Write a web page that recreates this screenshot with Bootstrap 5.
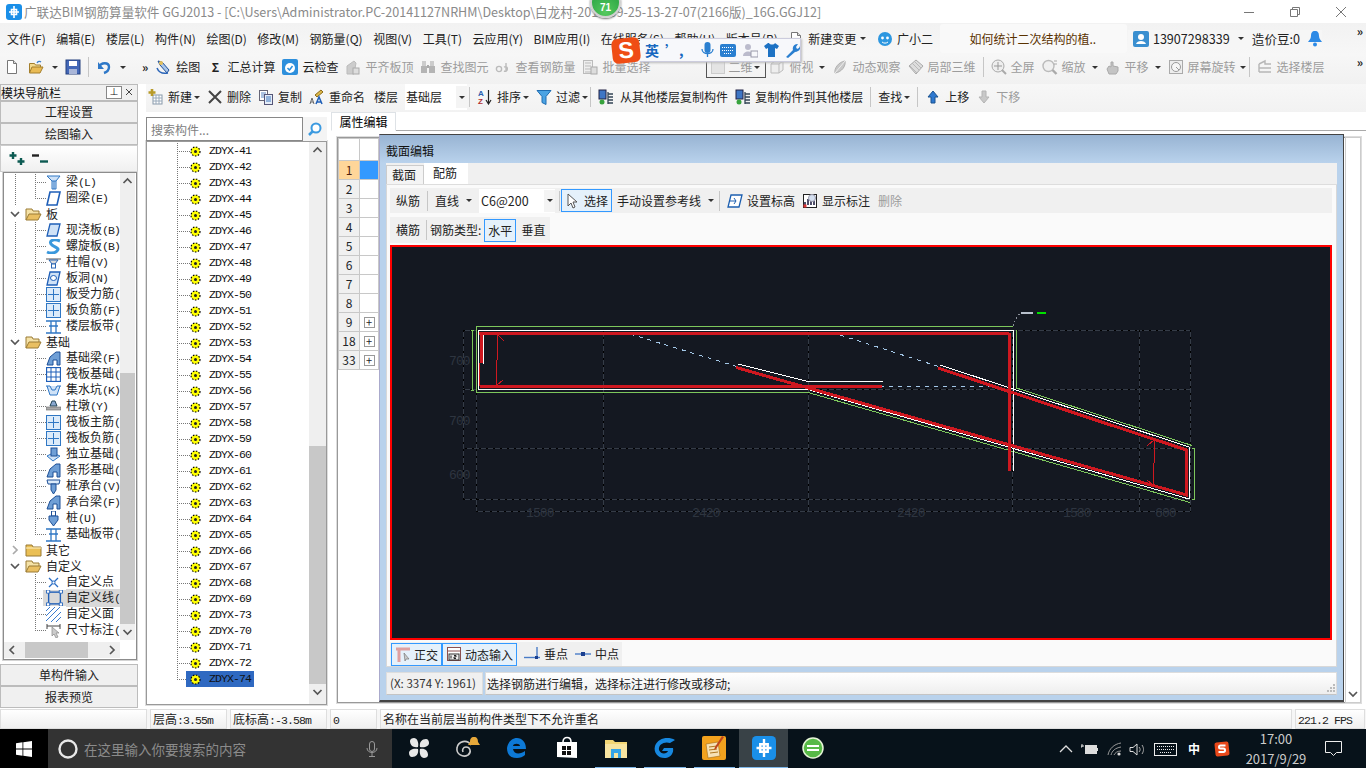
<!DOCTYPE html>
<html lang="zh-CN">
<head>
<meta charset="UTF-8">
<title>广联达BIM钢筋算量软件 GGJ2013</title>
<link href="https://cdn.jsdelivr.net/npm/bootstrap@5.3.0/dist/css/bootstrap.min.css" rel="stylesheet">
<style>
    html, body { width: 1366px; height: 768px; overflow: hidden; }
    body { font: 12px/16px "Noto Sans CJK SC", "Liberation Sans", sans-serif; color: #222; background: #fff; }
    svg { flex: none; display: block; }
    .ic { width: 16px; height: 16px; }
    .ascii { font: 11.5px/16px "Liberation Mono", monospace; letter-spacing: -.9px; }
    .caret-dn { width: 0; height: 0; border: 3px solid transparent; border-top: 3px solid #333; border-bottom: 0; flex: none; }

    /* title + menu */
    .title-bar { height: 23px; color: #8a8a8a; font-size: 12.58px; padding-left: 6px; gap: 2px; }
    .win-ctl { margin-left: auto; gap: 34px; padding-right: 19px; }
    .menu-bar { height: 31px; background: linear-gradient(#f2f2f2, #f7f7f7); padding-left: 7px; gap: 10.5px; }
    .menu-bar .ask { width: 187px; height: 29px; background: #f9f9f9; border-radius: 3px; color: #5a3200; padding-left: 29px; margin-left: -3px; }
    .user-box { gap: 4px; margin-left: -10px; padding-left: 5px; background: #f6f6f6; font-size: 12.6px; }
    .more { position: absolute; right: 3px; top: 2px; font-size: 12px; line-height: 12px; font-weight: 700; color: #222; }

    /* toolbars */
    .tool-1 { height: 30px; background: linear-gradient(#f7f7f7, #f1f1f1); position: relative; padding: 0 0 4px 4px; }
    .tool-2 { height: 28px; background: linear-gradient(#f7f7f7, #f2f2f2); padding: 0 0 2px 2px; gap: 7px; }
    .tb-item { gap: 4px; white-space: nowrap; }
    .tool-1-items { gap: 7px; }
    .off { color: #9c9c9c; }
    .sep { width: 1px; height: 20px; background: #c6c6c6; flex: none; }
    .sep-bar { margin: 0 7px; }
    .save-gap { margin-left: -1px; }
    .cr-2 { margin-left: 2px; }
    .sep.pull { margin-left: -4px; }
    .tool-2 .sep.hug { margin-left: -5px; }
    .tool-2 .caret-dn { margin-left: -2px; }
    .tool-2 .wide-ic { gap: 6px; }
    .tool-2 .sort-ic { gap: 4px; }
    .push-2 { margin-right: 2px; }
    .dim-combo { width: 60px; height: 22px; border: 1px solid #555; margin: 0 -4px 0 49px; padding: 0 5px 0 4px; color: #999; }
    .dim-combo i:first-child { width: 14px; height: 14px; background: #e4e4e4; border: 1px solid #ccc; margin-right: 3px; }

    /* left nav */
    .nav-col { width: 138px; flex: none; }
    .nav-head { height: 17px; background: #f0f0f0; border: 1px solid #bbb; color: #111; line-height: 14px; white-space: nowrap; }
    .pin { width: 16px; height: 13px; background: #fff; border: 1px solid #888; font-size: 9px; line-height: 10px; text-align: center; }
    .btn.nav-btn { height: 22px; padding: 0; font-size: 12px; line-height: 20px; color: #222; background: #f0f0f0; border: 1px solid #bcbcbc; border-radius: 0; width: 138px; flex: none; }
    .plus-row { height: 27px; padding-left: 7px; gap: 5px; background: linear-gradient(#fff, #f0f0f0); border: 1px solid #ccc; width: 138px; }
    .tree-box { margin: 0 1px 0 3px; height: 488px; border: 1px solid #8c8c8c; outline: 1px solid #d4d4d4; background: #fff; }
    .tree-rows { width: 116px; height: 467px; padding-top: 1px; overflow: hidden; }
    .t-row { height: 16px; white-space: nowrap; line-height: 16px; }
    .t-leaf { padding-left: 42px; gap: 5px;
        background:
            repeating-linear-gradient(to bottom, #777 0 1px, transparent 1px 2px) 11px 0 / 1px 100% no-repeat,
            repeating-linear-gradient(to bottom, #777 0 1px, transparent 1px 2px) 31px 0 / 1px 100% no-repeat,
            repeating-linear-gradient(to right, #777 0 1px, transparent 1px 2px) 31px 8px / 11px 1px no-repeat; }
    .t-leaf.t-end { background:
            repeating-linear-gradient(to bottom, #777 0 1px, transparent 1px 2px) 11px 0 / 1px 100% no-repeat,
            repeating-linear-gradient(to bottom, #777 0 1px, transparent 1px 2px) 31px 0 / 1px 50% no-repeat,
            repeating-linear-gradient(to right, #777 0 1px, transparent 1px 2px) 31px 8px / 11px 1px no-repeat; }
    .t-leaf.t-last { background:
            repeating-linear-gradient(to bottom, #777 0 1px, transparent 1px 2px) 31px 0 / 1px 50% no-repeat,
            repeating-linear-gradient(to right, #777 0 1px, transparent 1px 2px) 31px 8px / 11px 1px no-repeat; }
    .t-leaf.t-last2 { background:
            repeating-linear-gradient(to bottom, #777 0 1px, transparent 1px 2px) 31px 0 / 1px 100% no-repeat,
            repeating-linear-gradient(to right, #777 0 1px, transparent 1px 2px) 31px 8px / 11px 1px no-repeat; }
    .t-leaf b { font-weight: 400; }
    .t-leaf.t-sel b { background: #d9d9d9; flex: 1; }
    .t-leaf.t-sel { padding-left: 39px; gap: 0; }
    .t-leaf.t-sel svg { background: #d9d9d9; padding: 0 3px; width: 23px; height: 16px; }
    .t-fold { padding-left: 5px; gap: 4px; }
    .fold-chev { width: 12px; height: 12px; }
    .fold-ic { width: 17px; height: 15px; }
    .vbar { width: 15px; background: #efefef; }
    .vbar .arr { height: 16px; }
    .vbar .thumb { background: #c8c8c8; }
    .th-tree { margin-top: 184px; height: 251px; }
    .th-list { margin-top: 288px; height: 238px; }
    .hbar { height: 16px; width: 116px; margin: 2px 0 1px; background: #efefef; }
    .hbar i { display: block; width: 63px; height: 100%; background: #c8c8c8; margin: 0 auto 0 5px; }
    .hbar svg { margin: 2px 2px 0; }

    /* component list */
    .list-col { width: 181px; flex: none; padding-top: 5px; }
    .search-in.form-control { width: 156px; height: 24px; padding: 0 2px 0 4px; font-size: 12px; border: 1px solid #888; border-radius: 0; background: #fff; }
    .search-in::placeholder { color: #808080; }
    .search-btn { width: 25px; height: 24px; background: #f4f4f4; }
    .comp-box { height: 564px; border: 1px solid #999; outline: 1px solid #ddd; background: #fff; }
    .comp-rows { flex: 1; padding-top: 1px; overflow: hidden; }
    .c-row { height: 16px; padding-left: 43px; gap: 8px;
        background:
            repeating-linear-gradient(to bottom, #777 0 1px, transparent 1px 2px) 30px 0 / 1px 100% no-repeat,
            repeating-linear-gradient(to right, #777 0 1px, transparent 1px 2px) 30px 8px / 13px 1px no-repeat; }
    .c-row.c-last { background:
            repeating-linear-gradient(to bottom, #777 0 1px, transparent 1px 2px) 30px 0 / 1px 50% no-repeat,
            repeating-linear-gradient(to right, #777 0 1px, transparent 1px 2px) 30px 8px / 9px 1px no-repeat; }
    .c-row span { color: #111; }
    .c-pill { padding: 0 3px 0 4px; height: 16px; gap: 8px; background: #2f69c1; margin-left: -4px; }
    .list-vbar { width: 17px; }

    /* property panel + grid */
    .prop-col { margin-left: 4px; flex: 1; position: relative; }
    .nav-tabs.prop-tabs { height: 19px; border-bottom: 1px solid #aaa; }
    .prop-tabs .nav-link { height: 19px; width: 65px; padding: 0; text-align: center; font-size: 12px; line-height: 17px; color: #222; background: #fff; border: 1px solid #bbb; border-bottom-color: #fff; border-radius: 0; }
    .grid-wrap { margin: 6px 5px 6px 6px; height: 566px; border: 1px solid #999; outline: 1px solid #ddd; }
    table.prop-grid { width: 41px; margin: 0; table-layout: fixed; --bs-table-border-color: #c8c8c8; }
    .prop-grid td { padding: 0; height: 19px; text-align: center; line-height: 17px; font-size: 12px; }
    .prop-grid td:first-child { width: 21px; background: #f0f0f0; }
    .prop-grid tr.head td { height: 22px; background: #fff; }
    .prop-grid tr.now td:first-child { background: #ffd699; color: #502010; }
    .prop-grid tr.now td:last-child { background: #3399ff; }
    .expand { display: inline-block; width: 11px; height: 11px; border: 1px solid #999; line-height: 8px; font-size: 11px; background: #fff; }
    .side-scroll { position: absolute; right: 5px; top: 25px; width: 16px; height: 566px; border: 1px solid #ccc; }

    /* section dialog */
    .sec-dlg { position: absolute; left: 48px; top: 22px; width: 965px; height: 568px; background: #b9d2ec; border: 1px solid #444; border-bottom-width: 2px; border-left-color: #aac; padding: 0 6px; }
    .dlg-title { height: 28px; margin: 0 -6px; padding: 7px 0 0 6px; color: #111; background: linear-gradient(#98b4d3, #b9d2ec); line-height: 18px; flex: none; }
    .nav-tabs.dlg-tabs { height: 22px; background: #f0f0f0; border-bottom: 1px solid #ddd; flex: none; }
    .dlg-tabs .nav-link { padding: 0 2px 0 0; width: 38px; height: 19px; margin-top: 2px; font-size: 12px; line-height: 18px; text-align: center; color: #222; border: 1px solid #ccc; border-bottom: 0; border-radius: 0; background: #f4f4f4; }
    .dlg-tabs .nav-link.active { width: 44px; height: 21px; margin-top: 0; background: #fff; border-color: #fff; color: #222; }
    .dlg-panel { background: #fafafa; border: 1px solid #d8d8d8; border-top: 0; padding: 3px 4px 0 3px; height: 482px; flex: none; }
    .rb-row { background: #f0f0f0; padding-left: 6px; gap: 7px; }
    .rb-row.wide { height: 25px; width: 100%; margin-bottom: 4px; }
    .rb-row.narrow { height: 26px; width: 160px; gap: 3px; margin-bottom: 2px; }
    .rb-row .sep.hug { margin: 0 -6px 0 -3px; }
    .rb-row .pull-ref { margin-left: -2px; }
    .rb-row .sep.pull-sep { margin-left: -2px; }
    .rb-row .push-del { margin-left: 1px; }
    .rb-row.narrow .me-tight { margin-right: 3px; }
    .rb-row.narrow .after-btn { margin-left: 2px; }
    .btn.rb-on { height: 23px; padding: 0 3px; font-size: 12px; line-height: 19px; color: #222; background: #e5f1fb; border: 1px solid #3399ff; border-radius: 0; gap: 3px; }
    .rb-combo { width: 76px; height: 24px; background: #fff; padding: 0 0 0 2px; font-size: 12.5px; }
    .rb-combo u, .fl-combo u { width: 11px; height: 22px; background: #f4f4f4; text-decoration: none; margin-left: auto; }
    .rebar-canvas { height: 395px; border: 2px solid #f00; background: #141821; flex: none; }
    .snap-row { height: 24px; width: 232px; background: #f0f0f0; padding: 0 0 0 1px; gap: 7px; margin-top: 2px; }
    .fl-combo { width: 62px; height: 26px; background: #fff; padding: 0 0 0 1px; }
    .dlg-foot { height: 23px; margin-top: 5px; gap: 2px; flex: none; }
    .dlg-foot div { background: linear-gradient(#fff, #eee); border: 1px solid #ddd; border-bottom-color: #c4c4c4; padding-left: 1px; line-height: 21px; }
    .dlg-foot .xy { width: 97px; color: #333; background: #f0f0f0; font-size: 11.6px; padding-left: 3px; }
    .grip { margin: 10px 1px 0 auto; }

    /* status + taskbar */
    .status-bar { height: 20px; gap: 3px; background: #f6f6f6; padding-right: 1px; }
    .status-bar div { border: 1px solid #dedede; background: linear-gradient(#fff, #efefef); padding-left: 2px; height: 20px; line-height: 18px; white-space: nowrap; }
    .st-blank { width: 147px; } .st-h { width: 77px; } .st-b { width: 97px; } .st-n { width: 47px; } .st-fps { width: 70px; }
    .task-bar { height: 40px; background: #07121a; color: #fff; }
    .start { width: 48px; background: #000; }
    .search-bar { width: 344px; background: #333; color: #8b8b8b; font-size: 13.5px; padding-left: 10px; gap: 6px; }
    .search-bar svg:last-child { margin-left: auto; margin-right: 14px; }
    .task-row { margin-left: 2px; }
    .task-ic { width: 49.3px; height: 40px; border-bottom: 2px solid transparent; }
    .task-ic.open { position: relative; }
    .task-ic.open::after { content: ""; position: absolute; left: 4px; right: 4px; bottom: -2px; height: 2px; background: #7fb8ea; }
    .task-ic.act { background: #394247; border-bottom-color: #7fb8ea; }
    .tray { margin-left: auto; }
    .clock { width: 74px; text-align: center; line-height: 20px; color: #ccc; font-size: 13px; margin-left: 9px; }
    .note-ic { margin: 0 24px 0 12px; }
    .tr-up { margin-right: 8px; } .tr-bat { margin-right: 9px; } .tr-wifi { margin-right: 6px; } .tr-vol { margin-right: 9px; } .tr-kb { margin-right: 11px; } .tr-zh { margin-right: 14px; }

    /* floating bits on top of the screenshot */
    .ball { position: absolute; left: 590px; top: -13px; width: 31px; height: 31px; border-radius: 50%; background: radial-gradient(circle at 50% 85%, #55c95e, #1f9a3c); border: 2px solid #d0d0d0; box-shadow: 0 1px 2px #777; color: #fff; font: 700 10px/38px "Liberation Sans", sans-serif; text-align: center; }
    .ime { position: absolute; left: 612px; top: 38px; height: 25px; width: 184px; }
    .ime-s { width: 28px; height: 25px; background: #ef4d15; border-radius: 6px; transform: rotate(-6deg); color: #fff; font: 700 23px/25px "Liberation Sans", sans-serif; text-align: center; flex: none; }
    .ime-bar { flex: 1; height: 24px; background: #f7f8fb; border: 1px solid #ccd; border-left: 0; padding-left: 5px; gap: 6px; color: #1768c0; font-weight: 700; font-size: 14px; box-shadow: 1px 1px 2px #bbb; }
    .ime-mic { margin-left: 11px; }
</style>
</head>
<body>

<svg width="0" height="0" class="position-absolute">
    <defs>
        <symbol id="i-app" viewBox="0 0 16 16"><rect width="16" height="16" rx="3" fill="#1a8fe8"/><path d="M8 2v12M3 8h10M5.500 5.500h5v5h-5z" fill="none" stroke="#fff" stroke-width="1.600"/></symbol>
        <symbol id="i-page" viewBox="0 0 16 16"><path d="M3.500 1.500h6l3 3v10h-9z" fill="#fff" stroke="#777"/><path d="M9.500 1.500v3h3" fill="#ddd" stroke="#777"/></symbol>
        <symbol id="i-open" viewBox="0 0 16 16"><path d="M1.500 14V4.500h5l1 1.500h5v2" fill="#f3d98e" stroke="#a47f2d"/><path d="M1.500 14l2.500-6h11l-3 6z" fill="#e9bb55" stroke="#a47f2d"/><path d="M9 4c1-2 3-2 4-1" fill="none" stroke="#3b7fc9" stroke-width="1.200"/></symbol>
        <symbol id="i-save" viewBox="0 0 16 16"><rect x="1" y="1" width="14" height="14" fill="#4468b8" stroke="#24407f"/><rect x="4" y="2" width="8" height="5" fill="#fff"/><rect x="4" y="10" width="8" height="5" fill="#a9b6d8"/></symbol>
        <symbol id="i-undo" viewBox="0 0 16 16"><path d="M3 8c2-5 10-5 10 0 0 3-2 5-5 6" fill="none" stroke="#2e78c8" stroke-width="2.400"/><path d="M2 3v7h6z" fill="#2e78c8"/></symbol>
        <symbol id="i-draw" viewBox="0 0 16 16"><path d="M2 2l4 1 7 8-2 3-7-8z" fill="#a9c6ea" stroke="#1f4f98"/><path d="M1 9c2 5 6 6 11 5" fill="none" stroke="#2b65b8" stroke-width="1.500"/><circle cx="5" cy="4" r="2" fill="#e5c05a"/></symbol>
        <symbol id="i-cloud" viewBox="0 0 16 16"><rect width="16" height="16" rx="2" fill="#2d8fdc"/><circle cx="8" cy="9" r="5" fill="#fff"/><path d="M5.500 9l2 2 3-4" fill="none" stroke="#2d8fdc" stroke-width="1.500"/></symbol>
        <symbol id="i-g-flat" viewBox="0 0 16 16"><path d="M2 15V7l7-5 2 2-2 11z" fill="#ccc" stroke="#bbb"/><rect x="8" y="9" width="6" height="6" fill="#ddd" stroke="#aaa"/></symbol>
        <symbol id="i-g-bin" viewBox="0 0 16 16"><rect x="2" y="2" width="4" height="5" fill="#ccc"/><rect x="10" y="2" width="4" height="5" fill="#ccc"/><rect x="1" y="7" width="6" height="7" fill="#b4b4b4"/><rect x="9" y="7" width="6" height="7" fill="#b4b4b4"/><rect x="7" y="6" width="2" height="3" fill="#aaa"/></symbol>
        <symbol id="i-g-rebar" viewBox="0 0 16 16"><circle cx="4" cy="10" r="2.600" fill="none" stroke="#bbb" stroke-width="1.400"/><path d="M9 8c5-2 4 6 0 4M11 4v8" fill="none" stroke="#bbb" stroke-width="1.400"/></symbol>
        <symbol id="i-g-batch" viewBox="0 0 16 16"><rect x="1.500" y="1.500" width="9" height="13" fill="#eee" stroke="#bbb"/><path d="M3 4h6M3 7h6M3 10h6M3 13h6" stroke="#bbb"/><rect x="9" y="8" width="6" height="7" fill="#ddd" stroke="#aaa"/></symbol>
        <symbol id="i-g-box" viewBox="0 0 16 16"><path d="M2 5l4-3h8v9l-4 3H2z" fill="#eee" stroke="#bbb"/><path d="M2 5h8v9M10 5l4-3" fill="none" stroke="#bbb"/></symbol>
        <symbol id="i-g-orbit" viewBox="0 0 16 16"><path d="M3 14c-1-4 3-11 10-12 1 5-3 11-10 12z" fill="#c8c8c8" stroke="#b0b0b0"/><path d="M3 14L13 2" stroke="#eee"/></symbol>
        <symbol id="i-g-cube" viewBox="0 0 16 16"><path d="M8 1l7 6-7 8-7-8z" fill="#ddd" stroke="#aaa"/><path d="M4 4l7 7M6 2l7 7M2 7l7 7" stroke="#b8b8b8"/></symbol>
        <symbol id="i-g-full" viewBox="0 0 16 16"><circle cx="7" cy="7" r="6" fill="#eee" stroke="#aaa"/><path d="M7 3v8M3 7h8" stroke="#999"/><path d="M11 11l4 4" stroke="#aaa" stroke-width="2"/></symbol>
        <symbol id="i-g-zoom" viewBox="0 0 16 16"><circle cx="6.500" cy="7" r="5.500" fill="#f0f0f0" stroke="#bbb" stroke-width="1.400"/><path d="M10.500 11l4 4" stroke="#aaa" stroke-width="2.400"/><path d="M12 2h3M12 5h3" stroke="#aaa"/></symbol>
        <symbol id="i-g-hand" viewBox="0 0 16 16"><path d="M4 15l-2-5 2-3 2 1V3h2v4l5 1v4l-2 3z" fill="#c4c4c4" stroke="#aaa"/></symbol>
        <symbol id="i-g-rot" viewBox="0 0 16 16"><rect x="1.500" y="1.500" width="13" height="13" fill="#eee" stroke="#aaa"/><circle cx="8" cy="8" r="4.500" fill="#f7f7f7" stroke="#9a9a9a"/><path d="M8 8l3 3" stroke="#999"/></symbol>
        <symbol id="i-g-floor" viewBox="0 0 16 16"><path d="M2 5l6-3v3l6 0M2 9h12M2 13h12M2 5v8" fill="none" stroke="#b6b6b6" stroke-width="1.400"/></symbol>
        <symbol id="i-plus" viewBox="0 0 16 16"><rect x="5" y="6" width="9" height="9" fill="#fff" stroke="#89a"/><path d="M5 9h9M5 12h9M8 6v9M11 6v9" stroke="#9ab"/><path d="M4 0v7M0.500 3.500h7" stroke="#b89b2a" stroke-width="2.600"/></symbol>
        <symbol id="i-x" viewBox="0 0 16 16"><path d="M2 2l12 12M14 2L2 14" stroke="#444" stroke-width="2"/></symbol>
        <symbol id="i-copy" viewBox="0 0 16 16"><rect x="1.500" y="1.500" width="8" height="10" fill="#fff" stroke="#667"/><path d="M3 4h5M3 6h5M3 8h5" stroke="#5b87c3"/><rect x="6.500" y="5.500" width="8" height="10" fill="#e5edf8" stroke="#557"/><path d="M8 8h5M8 10h5M8 12h5" stroke="#3f78c0"/></symbol>
        <symbol id="i-rename" viewBox="0 0 16 16"><path d="M6 6l6-5 2 2-6 5z" fill="#dcb84a" stroke="#8c6a18"/><path d="M1 15l2-6 2 6M2 13h2" fill="none" stroke="#666"/><path d="M7 15l3-7 3 7M8.200 13h3.600" fill="none" stroke="#2060b8" stroke-width="1.500"/></symbol>
        <symbol id="i-sort" viewBox="0 0 16 16"><text x="1" y="7" font-size="8" font-weight="700" fill="#2860b0" font-family="Liberation Sans">A</text><text x="1" y="15" font-size="8" font-weight="700" fill="#b03030" font-family="Liberation Sans">Z</text><path d="M11.500 1v13M9 11l2.500 4 2.500-4" fill="none" stroke="#222" stroke-width="1.200"/></symbol>
        <symbol id="i-filter" viewBox="0 0 16 16"><path d="M1 1.500h14l-5 6v8l-4-2v-6z" fill="#4ba3e3" stroke="#1f6db2"/></symbol>
        <symbol id="i-fromf" viewBox="0 0 16 16"><rect x="1" y="1" width="7" height="9" fill="#3e76c5" stroke="#224"/><circle cx="4" cy="13" r="2.500" fill="#37a33d"/><path d="M10 5h5M10 8h5M10 11h5M10 14h5M10 3v12" stroke="#345" stroke-width="1.300"/></symbol>
        <symbol id="i-up" viewBox="0 0 16 16"><path d="M8 2l5 6h-3v6H6V8H3z" fill="#2e78cf" stroke="#1a528f"/></symbol>
        <symbol id="i-dn" viewBox="0 0 16 16"><path d="M8 14l5-6h-3V2H6v6H3z" fill="#c8c8c8" stroke="#b4b4b4"/></symbol>
        <symbol id="i-cursor" viewBox="0 0 16 16"><path d="M3 1l0 12 3-3 2 5 2-1-2-5h4z" fill="#fff" stroke="#555"/></symbol>
        <symbol id="i-level" viewBox="0 0 16 16"><path d="M4 2h11l-3 12H1z" fill="#fff" stroke="#1c5fb0" stroke-width="1.300"/><path d="M2 8h7l-2 3M9 8L7 5" fill="none" stroke="#1c5fb0"/></symbol>
        <symbol id="i-mark" viewBox="0 0 16 16"><rect x="1.500" y="1.500" width="13" height="13" fill="#fff" stroke="#222"/><path d="M3 12V9M6 12V6M9 12V4M12 12V8" stroke="#224" stroke-width="1.600"/><circle cx="10" cy="5" r="3.500" fill="#d4dff0" stroke="#99a"/><rect x="1.500" y="11.500" width="3" height="3" fill="#d33"/></symbol>
        <symbol id="i-ortho" viewBox="0 0 16 16"><path d="M1 3h14M4 3v13" stroke="#dfa0a0" stroke-width="3"/><path d="M9 7l5 6-3 0-1 2z" fill="#ccc" stroke="#777" stroke-width=".7"/></symbol>
        <symbol id="i-dyn" viewBox="0 0 16 16"><rect x="1.500" y="1.500" width="13" height="13" fill="#fff" stroke="#8b5050"/><path d="M1 5h14" stroke="#8b5050"/><rect x="3" y="8" width="10" height="6" fill="#eee" stroke="#333"/><path d="M5 9.500v3M8 9.500h2v1.500H8v1.500h2" stroke="#222" fill="none"/></symbol>
        <symbol id="i-perp" viewBox="0 0 16 16"><path d="M0 11.500h16" stroke="#4a7cc7" stroke-width="1.400"/><path d="M13 1v11" stroke="#4a7cc7" stroke-width="1.400"/><rect x="11" y="10" width="3" height="3" fill="#1b3f90"/></symbol>
        <symbol id="i-mid" viewBox="0 0 16 16"><path d="M0 8h16" stroke="#4a7cc7" stroke-width="1.400"/><rect x="6" y="6" width="4" height="4" fill="#1b3f90"/></symbol>
        <symbol id="fold-open" viewBox="0 0 17 15"><path d="M1 13V2h6l1 2h6v3" fill="#f5e2a7" stroke="#9a7b34"/><path d="M1 13l3-6h12l-3 6z" fill="#e9bf62" stroke="#9a7b34"/></symbol>
        <symbol id="fold-shut" viewBox="0 0 17 15"><path d="M1 13V2h6l1 2h8v9z" fill="#eabf55" stroke="#9a7b34"/><path d="M1 5h15" stroke="#fff2c6"/></symbol>
        <symbol id="chev-d" viewBox="0 0 12 12"><path d="M2 4l4 4 4-4" fill="none" stroke="#555" stroke-width="1.700"/></symbol>
        <symbol id="chev-r" viewBox="0 0 12 12"><path d="M4 2l4 4-4 4" fill="none" stroke="#aaa" stroke-width="1.700"/></symbol>
        <symbol id="chev-u" viewBox="0 0 12 12"><path d="M2 8l4-4 4 4" fill="none" stroke="#555" stroke-width="1.700"/></symbol>
        <symbol id="chev-l" viewBox="0 0 12 12"><path d="M8 2L4 6l4 4" fill="none" stroke="#555" stroke-width="1.700"/></symbol>
        <symbol id="chev-rd" viewBox="0 0 12 12"><path d="M4 2l4 4-4 4" fill="none" stroke="#555" stroke-width="1.700"/></symbol>
        <symbol id="t-beam" viewBox="0 0 15 15"><path d="M1 1h13l-4 5v8H6V6z" fill="#cfe2f7" stroke="#2f77c4"/><path d="M6 6h4M8 6v8" stroke="#2f77c4"/></symbol>
        <symbol id="t-ring" viewBox="0 0 15 15"><path d="M4 1h10l-3 13H1z" fill="#fff" stroke="#1f5fb8" stroke-width="1.600"/></symbol>
        <symbol id="t-plate" viewBox="0 0 15 15"><path d="M4 1h10l-3 12H1z" fill="#cfe2f7" stroke="#1f5fb8" stroke-width="1.300"/></symbol>
        <symbol id="t-spiral" viewBox="0 0 15 15"><path d="M14 2C6-1 2 3 6 6s8 3 5 6-8 2-10 1" fill="none" stroke="#3a98dc" stroke-width="3"/></symbol>
        <symbol id="t-cap" viewBox="0 0 15 15"><path d="M0 3h15v2H0z" fill="#aaa"/><path d="M3 5h9l-3 4H6z" fill="#ddd" stroke="#2a66b4"/><rect x="5.500" y="9" width="4" height="4" fill="#fff" stroke="#2a66b4"/></symbol>
        <symbol id="t-hole" viewBox="0 0 15 15"><path d="M4 1h10l-3 13H1z" fill="#cfe2f7" stroke="#1f5fb8" stroke-width="1.300"/><ellipse cx="7.500" cy="7" rx="3" ry="2.500" fill="#fff" stroke="#1f5fb8"/></symbol>
        <symbol id="t-grid" viewBox="0 0 15 15"><rect x=".5" y=".5" width="14" height="14" fill="#dcebfa" stroke="#2f77c4"/><path d="M7.500 2v11M2 7.500h11" stroke="#2f77c4"/></symbol>
        <symbol id="t-strip" viewBox="0 0 15 15"><path d="M0 2h15M0 14h15M5 2v12M10 2v12M3 7h9" stroke="#2f77c4" stroke-width="1.300"/></symbol>
        <symbol id="t-foot" viewBox="0 0 15 15"><path d="M1 14l3-8 6-5h4v13h-3V9H7v5z" fill="#6f9fd6" stroke="#1d4f96"/></symbol>
        <symbol id="t-raft" viewBox="0 0 15 15"><rect x=".5" y=".5" width="14" height="14" fill="#fff" stroke="#1f5fb8" stroke-width="1.300"/><path d="M5 1v13M10 1v13M1 5h13M1 10h13" stroke="#1f5fb8"/></symbol>
        <symbol id="t-pit" viewBox="0 0 15 15"><path d="M0 3h4l2 4h3l2-4h4M1 3l3 9h7l3-9" fill="#cfe2f7" stroke="#2f77c4"/></symbol>
        <symbol id="t-pier" viewBox="0 0 15 15"><path d="M6 2h3l2 5H4z" fill="#8aa8d0" stroke="#245"/><rect x="0" y="8" width="15" height="3" fill="#aaa" stroke="#666" stroke-width=".6"/></symbol>
        <symbol id="t-iso" viewBox="0 0 15 15"><path d="M1 9l6-3 7 3-7 5z" fill="#cfe2f7" stroke="#2f77c4"/><rect x="5" y="1" width="6" height="8" fill="#6f9fd6" stroke="#1d4f96"/></symbol>
        <symbol id="t-pile" viewBox="0 0 15 15"><path d="M1 1h13l-1 4H2z" fill="#dcebfa" stroke="#1d4f96"/><path d="M5 5h5v6l-2.500 4L5 11z" fill="#6f9fd6" stroke="#1d4f96"/></symbol>
        <symbol id="t-u" viewBox="0 0 15 15"><rect x="5.500" y="0" width="4" height="5" fill="#fff" stroke="#1d4f96"/><path d="M3 5h9v4l-4.500 6L3 9z" fill="#6f9fd6" stroke="#1d4f96"/></symbol>
        <symbol id="t-pt" viewBox="0 0 15 15"><path d="M3 3l9 9M12 3l-9 9" stroke="#2a6dc4" stroke-width="1.300"/><circle cx="7.500" cy="7.500" r="1.500" fill="#fff" stroke="#2a6dc4"/></symbol>
        <symbol id="t-ln" viewBox="0 0 15 15"><rect x="2" y="2" width="11" height="11" fill="none" stroke="#1f5fb8" stroke-width="1.300"/><path d="M0 0h3v3H0zM12 0h3v3h-3zM0 12h3v3H0zM12 12h3v3h-3z" fill="#fff" stroke="#1f5fb8" stroke-width=".8"/></symbol>
        <symbol id="t-area" viewBox="0 0 15 15"><path d="M0 4l4-4M0 9l9-9M0 14L14 0M5 15L15 5M10 15l5-5" stroke="#3a7bd0"/></symbol>
        <symbol id="t-dim" viewBox="0 0 15 15"><path d="M1 1v5M14 1v5M1 3h13" stroke="#444"/><path d="M6 4l0 9 2-2 2 4 2-1-2-4h3z" fill="#ccc" stroke="#888" stroke-width=".7"/></symbol>
    </defs>
</svg>

<!-- title -->
<div class="title-bar d-flex align-items-center">
    <svg class="ic"><use href="#i-app"/></svg>
    <span class="text-nowrap">广联达BIM钢筋算量软件 GGJ2013 - [C:\Users\Administrator.PC-20141127NRHM\Desktop\白龙村-2017-09-25-13-27-07(2166版)_16G.GGJ12]</span>
    <div class="win-ctl d-flex align-items-center">
        <svg width="12" height="12"><path d="M1 6.500h10" stroke="#777"/></svg>
        <svg width="12" height="12"><path d="M1.500 3.500h7v7h-7zM3.500 3V1.500h7v7H9" fill="none" stroke="#777"/></svg>
        <svg width="12" height="12"><path d="M1 1l10 10M11 1L1 11" stroke="#777"/></svg>
    </div>
</div>

<!-- menu -->
<div class="menu-bar d-flex align-items-center position-relative text-nowrap">
    <span>文件(F)</span><span>编辑(E)</span><span>楼层(L)</span><span>构件(N)</span><span>绘图(D)</span><span>修改(M)</span><span>钢筋量(Q)</span><span>视图(V)</span><span>工具(T)</span><span>云应用(Y)</span><span>BIM应用(I)</span><span>在线服务(S)</span><span>帮助(H)</span><span>版本号(B)</span>
    <span class="d-flex align-items-center tb-item">
        <svg class="ic"><use href="#i-page"/></svg>新建变更<i class="caret-dn"></i>
    </span>
    <span class="d-flex align-items-center tb-item">
        <svg class="ic" viewBox="0 0 16 16"><circle cx="8" cy="8" r="7" fill="#2d97e0"/><circle cx="5.500" cy="7" r="1.400" fill="#fff"/><circle cx="10.500" cy="7" r="1.400" fill="#fff"/><path d="M5 11c2 1.500 4 1.500 6 0" stroke="#fff" fill="none"/></svg>广小二
    </span>
    <span class="ask d-flex align-items-center">如何统计二次结构的植..</span>
    <span class="user-box d-flex align-items-center">
        <svg class="ic" viewBox="0 0 16 16"><rect width="16" height="16" rx="2" fill="#3a8fd0"/><circle cx="8" cy="6" r="3" fill="#fff"/><path d="M3 13c1-4 9-4 10 0z" fill="#fff"/></svg>
        <span>13907298339</span><i class="caret-dn mx-1"></i><span>造价豆:0</span>
        <svg class="ms-1" width="14" height="17" viewBox="0 0 14 17"><path d="M7 1c3 0 4 2 4 5 0 3 2 4 3 6H0c1-2 3-3 3-6 0-3 1-5 4-5z" fill="#2d8ae6"/><circle cx="7" cy="14.500" r="2" fill="#2d8ae6"/></svg>
    </span>
    <span class="more">»</span>
</div>

<!-- toolbar 1 -->
<div class="tool-1 d-flex align-items-center text-nowrap">
    <svg class="ic"><use href="#i-page"/></svg>
    <svg class="ic ms-2"><use href="#i-open"/></svg><i class="caret-dn mx-2"></i>
    <svg class="ic save-gap"><use href="#i-save"/></svg>
    <i class="sep sep-bar"></i>
    <svg class="ic"><use href="#i-undo"/></svg><i class="caret-dn mx-2"></i>
    <b class="ms-2 me-2">»</b>
    <div class="tool-1-items d-flex align-items-center">
        <span class="tb-item d-flex align-items-center"><svg class="ic"><use href="#i-draw"/></svg>绘图</span>
        <span class="tb-item d-flex align-items-center"><b class="ic text-center">Σ</b>汇总计算</span>
        <span class="tb-item d-flex align-items-center"><svg class="ic"><use href="#i-cloud"/></svg>云检查</span>
        <span class="tb-item d-flex align-items-center off"><svg class="ic"><use href="#i-g-flat"/></svg>平齐板顶</span>
        <span class="tb-item d-flex align-items-center off"><svg class="ic"><use href="#i-g-bin"/></svg>查找图元</span>
        <span class="tb-item d-flex align-items-center off"><svg class="ic"><use href="#i-g-rebar"/></svg>查看钢筋量</span>
        <span class="tb-item d-flex align-items-center off"><svg class="ic"><use href="#i-g-batch"/></svg>批量选择</span>
        <span class="dim-combo d-flex align-items-center"><i></i>二维<i class="caret-dn ms-auto"></i></span>
        <span class="tb-item d-flex align-items-center off"><svg class="ic"><use href="#i-g-box"/></svg>俯视<i class="caret-dn cr-2"></i></span>
        <span class="tb-item d-flex align-items-center off"><svg class="ic"><use href="#i-g-orbit"/></svg>动态观察</span>
        <span class="tb-item d-flex align-items-center off"><svg class="ic"><use href="#i-g-cube"/></svg>局部三维</span>
        <i class="sep"></i>
        <span class="tb-item d-flex align-items-center off"><svg class="ic"><use href="#i-g-full"/></svg>全屏</span>
        <span class="tb-item d-flex align-items-center off"><svg class="ic"><use href="#i-g-zoom"/></svg>缩放<i class="caret-dn cr-2"></i></span>
        <span class="tb-item d-flex align-items-center off"><svg class="ic"><use href="#i-g-hand"/></svg>平移<i class="caret-dn cr-2"></i></span>
        <span class="tb-item d-flex align-items-center off"><svg class="ic"><use href="#i-g-rot"/></svg>屏幕旋转<i class="caret-dn"></i></span>
        <i class="sep pull"></i>
        <span class="tb-item d-flex align-items-center off"><svg class="ic"><use href="#i-g-floor"/></svg>选择楼层</span>
    </div>
    <span class="more">»</span>
</div>

<!-- main area -->
<div class="d-flex" id="main-area">
    <div class="nav-col d-flex flex-column">
        <div class="nav-head d-flex align-items-center">模块导航栏<span class="pin ms-auto">⊥</span><svg width="15" height="13" viewBox="0 0 15 13"><path d="M4 3l6 6M10 3l-6 6" stroke="#444"/></svg></div>
        <button class="btn nav-btn" type="button">工程设置</button>
        <button class="btn nav-btn" type="button">绘图输入</button>
        <div class="plus-row d-flex align-items-center">
            <svg width="18" height="17" viewBox="0 0 18 17"><path d="M5 2v7M1.500 5.500h7M13 8v7M9.500 11.500h7" stroke="#0c5a52" stroke-width="2.400"/></svg>
            <svg width="18" height="17" viewBox="0 0 18 17"><path d="M1 5.500h7" stroke="#222" stroke-width="2.400"/><path d="M9 11.500h8" stroke="#0c5a52" stroke-width="2.400"/></svg>
        </div>
        <div class="tree-box d-flex flex-column">
            <div class="d-flex">
                <div class="tree-rows" id="tree-rows"></div>
                <div class="vbar d-flex flex-column">
                    <div class="arr"><svg width="15" height="16" viewBox="-1.500 -2 15 16"><use href="#chev-u" width="12" height="12"/></svg></div>
                    <div class="thumb th-tree"></div>
                    <div class="arr"><svg width="15" height="16" viewBox="-1.500 -2 15 16"><use href="#chev-d" width="12" height="12"/></svg></div>
                </div>
            </div>
            <div class="hbar d-flex">
                <svg width="12" height="12"><use href="#chev-l"/></svg>
                <i></i>
                <svg width="12" height="12"><use href="#chev-rd"/></svg>
            </div>
        </div>
        <button class="btn nav-btn mt-1" type="button">单构件输入</button>
        <button class="btn nav-btn" type="button">报表预览</button>
    </div>

    <div class="d-flex flex-column flex-fill ms-2">
        <!-- toolbar 2 -->
        <div class="tool-2 d-flex align-items-center text-nowrap">
            <span class="tb-item d-flex align-items-center"><svg class="ic"><use href="#i-plus"/></svg>新建<i class="caret-dn"></i></span>
            <span class="tb-item d-flex align-items-center"><svg class="ic"><use href="#i-x"/></svg>删除</span>
            <span class="tb-item d-flex align-items-center"><svg class="ic"><use href="#i-copy"/></svg>复制</span>
            <span class="tb-item push-2 d-flex align-items-center"><svg class="ic"><use href="#i-rename"/></svg>重命名</span>
            <span>楼层</span>
            <span class="fl-combo d-flex align-items-center">基础层<u class="d-flex align-items-center justify-content-center"><i class="caret-dn ms-0"></i></u></span>
            <i class="sep hug"></i>
            <span class="tb-item sort-ic d-flex align-items-center"><svg class="ic"><use href="#i-sort"/></svg>排序<i class="caret-dn"></i></span>
            <span class="tb-item d-flex align-items-center"><svg class="ic"><use href="#i-filter"/></svg>过滤<i class="caret-dn"></i></span>
            <i class="sep hug"></i>
            <span class="tb-item wide-ic d-flex align-items-center"><svg class="ic"><use href="#i-fromf"/></svg>从其他楼层复制构件</span>
            <span class="tb-item d-flex align-items-center"><svg class="ic"><use href="#i-fromf"/></svg>复制构件到其他楼层</span>
            <i class="sep"></i>
            <span class="tb-item d-flex align-items-center">查找<i class="caret-dn"></i></span>
            <i class="sep"></i>
            <span class="tb-item d-flex align-items-center"><svg class="ic"><use href="#i-up"/></svg>上移</span>
            <span class="tb-item d-flex align-items-center off"><svg class="ic"><use href="#i-dn"/></svg>下移</span>
        </div>

        <div class="d-flex">
            <!-- component list -->
            <div class="list-col d-flex flex-column">
                <div class="input-group flex-nowrap">
                    <input class="search-in form-control" placeholder="搜索构件...">
                    <div class="search-btn d-flex align-items-center justify-content-center">
                        <svg width="15" height="15" viewBox="0 0 15 15"><circle cx="9" cy="6" r="4.500" fill="#fff" stroke="#3b9ae0" stroke-width="2"/><path d="M6 9l-4 4" stroke="#3b9ae0" stroke-width="2.500"/></svg>
                    </div>
                </div>
                <div class="comp-box d-flex">
                    <div class="comp-rows" id="comp-rows"></div>
                    <div class="vbar list-vbar d-flex flex-column">
                        <div class="arr"><svg width="17" height="16" viewBox="-2.500 -2 17 16"><use href="#chev-u" width="12" height="12"/></svg></div>
                        <div class="thumb th-list"></div>
                        <div class="arr"><svg width="17" height="16" viewBox="-2.500 -2 17 16"><use href="#chev-d" width="12" height="12"/></svg></div>
                    </div>
                </div>
            </div>

            <!-- property panel -->
            <div class="prop-col">
                <ul class="nav nav-tabs prop-tabs">
                    <li class="nav-item"><a class="nav-link active" href="#">属性编辑</a></li>
                </ul>
                <div class="grid-wrap">
                    <table class="table table-bordered prop-grid" id="prop-grid"></table>
                </div>
                <div class="side-scroll d-flex align-items-end"><svg width="14" height="16" viewBox="-1 -2 14 16"><use href="#chev-d" width="12" height="12"/></svg></div>

                <!-- section editor window -->
                <div class="sec-dlg d-flex flex-column">
                    <div class="dlg-title">截面编辑</div>
                    <ul class="nav nav-tabs dlg-tabs">
                        <li class="nav-item"><a class="nav-link" href="#">截面</a></li>
                        <li class="nav-item"><a class="nav-link active" href="#">配筋</a></li>
                    </ul>
                    <div class="dlg-panel d-flex flex-column">
                        <div class="rb-row wide d-flex align-items-center text-nowrap">
                            <span>纵筋</span><i class="sep"></i><span>直线</span><i class="caret-dn"></i>
                            <span class="rb-combo d-flex align-items-center">C6@200<u class="d-flex align-items-center justify-content-center"><i class="caret-dn"></i></u></span>
                            <i class="sep hug"></i>
                            <button class="btn rb-on d-flex align-items-center" type="button"><svg class="ic"><use href="#i-cursor"/></svg>选择</button>
                            <span class="pull-ref">手动设置参考线</span><i class="caret-dn"></i><i class="sep pull-sep"></i>
                            <span class="tb-item d-flex align-items-center"><svg class="ic"><use href="#i-level"/></svg>设置标高</span>
                            <span class="tb-item d-flex align-items-center"><svg class="ic"><use href="#i-mark"/></svg>显示标注</span>
                            <span class="off push-del">删除</span>
                        </div>
                        <div class="rb-row narrow d-flex align-items-center text-nowrap">
                            <span class="me-tight">横筋</span><i class="sep"></i><span>钢筋类型:</span>
                            <button class="btn rb-on" type="button">水平</button><span class="after-btn">垂直</span>
                        </div>
                        <div class="rebar-canvas">
                            <svg width="938" height="391" viewBox="392 247 938 391" shape-rendering="crispEdges" fill="none">
                                <g stroke="#353c47">
                                    <path d="M463 330.500H1191M463 389.500H1191M465 448.500H1191M463 499.500H1191M476 511.500H1191"/>
                                    <path d="M463.500 330V499M476.500 330V512M603.500 330V512M808.500 330V512M1012.500 330V512M1139.500 330V512M1190.500 330V512"/>
                                </g>
                                <g stroke="#000" stroke-dasharray="2 5">
                                    <path d="M463 330.500H1191M463 389.500H1191M465 448.500H1191M463 499.500H1191M476 511.500H1191"/>
                                    <path d="M463.500 330V499M476.500 330V512M603.500 330V512M808.500 330V512M1012.500 330V512M1139.500 330V512M1190.500 330V512"/>
                                </g>
                                <g fill="#2e3540" font-family="Liberation Mono, monospace" font-size="13" letter-spacing="-.9" stroke="none" shape-rendering="auto">
                                    <text x="449" y="365">700</text><text x="449" y="425">700</text><text x="449" y="479">600</text>
                                    <text x="526" y="517">1500</text><text x="692" y="517">2420</text><text x="897" y="517">2420</text><text x="1063" y="517">1580</text><text x="1155" y="517">600</text>
                                </g>
                                <g stroke="#a4c8e8" stroke-dasharray="4 5">
                                    <path d="M630 334L740 367.500"/><path d="M840 335L940 367"/><path d="M808 386.500H996"/>
                                </g>
                                <g stroke="#7dc75c">
                                    <path d="M476.500 392V326.500H1012.500"/><path d="M476 392.500H808L1190 502.500"/>
                                    <path d="M472.500 330V390M471 330.500H474M471 390.500H474"/>
                                    <path d="M1016.500 330V388L1192 445.500"/><path d="M1194.500 448V499M1192 448.500H1195M1192 499.500H1195"/>
                                </g>
                                <g stroke="#fff">
                                    <path d="M478.500 389V331M478 330.500H1013"/><path d="M478 389.500H808L1189 499"/>
                                    <path d="M1013.500 330V471"/><path d="M940 365L1189 447V499"/>
                                    <path d="M483.500 333V364"/><path d="M738 364L808 381.500H883"/>
                                </g>
                                <g stroke="#cf1820" stroke-width="3">
                                    <path d="M479 333.500H1009"/><path d="M480 386H882"/>
                                    <path d="M736 367.500L1186.500 495V450L938 368"/>
                                    <path d="M1009.500 333V471"/><path d="M481 333V363"/>
                                </g>
                                <g stroke="#cf1820">
                                    <path d="M479 363V386"/><path d="M497.500 334V360M496.500 360V386M498 335l6 6M497 385l6-5"/>
                                    <path d="M1154.500 440V463M1153.500 463V486M1154 440l-7 6M1153 485l-6-5"/>
                                </g>
                                <path d="M1013 326l2-5 3-6 3-2" stroke="#8a8f99" stroke-dasharray="2 2"/>
                                <path d="M1021 312.500h12" stroke="#b8c0cc" stroke-width="2"/><path d="M1037 312.500h9" stroke="#00e000" stroke-width="2"/>
                            </svg>
                        </div>
                        <div class="snap-row d-flex align-items-center text-nowrap">
                            <div class="d-flex">
                                <button class="btn rb-on d-flex align-items-center" type="button"><svg class="ic"><use href="#i-ortho"/></svg>正交</button>
                                <button class="btn rb-on d-flex align-items-center" type="button"><svg class="ic"><use href="#i-dyn"/></svg>动态输入</button>
                            </div>
                            <span class="tb-item d-flex align-items-center"><svg class="ic"><use href="#i-perp"/></svg>垂点</span>
                            <span class="tb-item d-flex align-items-center"><svg class="ic"><use href="#i-mid"/></svg>中点</span>
                        </div>
                    </div>
                    <div class="dlg-foot d-flex">
                        <div class="xy text-nowrap">(X: 3374 Y: 1961)</div>
                        <div class="flex-fill d-flex">选择钢筋进行编辑，选择标注进行修改或移动;
                            <svg class="grip" width="9" height="9" viewBox="0 0 9 9"><path d="M7 1h2v2H7zM4 4h2v2H4zM7 4h2v2H7zM1 7h2v2H1zM4 7h2v2H4zM7 7h2v2H7z" fill="#bbb"/></svg>
                        </div>
                    </div>
                </div>
            </div>
        </div>
    </div>
</div>

<!-- status -->
<div class="status-bar d-flex">
    <div class="st-blank"></div>
    <div class="st-h">层高<span class="ascii">:3.55m</span></div>
    <div class="st-b">底标高<span class="ascii">:-3.58m</span></div>
    <div class="st-n"><span class="ascii">0</span></div>
    <div class="flex-fill">名称在当前层当前构件类型下不允许重名</div>
    <div class="st-fps"><span class="ascii">221.2 FPS</span></div>
</div>

<!-- taskbar -->
<div class="task-bar d-flex">
    <div class="start d-flex align-items-center justify-content-center">
        <svg width="16" height="16" viewBox="0 0 16 16"><path d="M0 2.200l6.500-.9v6.300H0zM7.300 1.200L16 0v7.600H7.300zM0 8.400h6.500v6.300L0 13.800zM7.300 8.400H16V16l-8.700-1.200z" fill="#fff"/></svg>
    </div>
    <div class="search-bar d-flex align-items-center">
        <svg width="20" height="20" viewBox="0 0 20 20"><circle cx="10" cy="10" r="8.500" fill="none" stroke="#e8e8e8" stroke-width="2.400"/></svg>
        <span>在这里输入你要搜索的内容</span>
        <svg width="12" height="16" viewBox="0 0 12 16"><rect x="3.500" y=".5" width="5" height="10" rx="2.500" fill="none" stroke="#999"/><path d="M1 7c0 6 10 6 10 0M6 12v3M3 15.500h6" fill="none" stroke="#999"/></svg>
    </div>
    <div class="task-row d-flex">
        <div class="task-ic d-flex align-items-center justify-content-center">
            <svg width="22" height="22" viewBox="0 0 22 22"><g fill="#e8e8e8"><path d="M10 10C5 11 2 8 2 4c0-2 2-3 4-3 3 0 5 4 4 9z"/><path d="M12 10C11 5 14 2 18 2c2 0 3 2 3 4 0 3-4 5-9 4z"/><path d="M12 12c5-1 8 2 8 6 0 2-2 3-4 3-3 0-5-4-4-9z"/><path d="M10 12c1 5-2 8-6 8-2 0-3-2-3-4 0-3 4-5 9-4z"/></g></svg>
        </div>
        <div class="task-ic d-flex align-items-center justify-content-center">
            <svg width="28" height="24" viewBox="0 0 28 24"><path d="M17 9C13 3 4 5 3 12c-1 6 6 10 11 7 4-3 2-8-2-8-3 0-4 3-3 5" fill="none" stroke="#ccc" stroke-width="1.600"/><path d="M20 1c3 0 4 2 4 5l2 3H14l2-3c0-3 1-5 4-5z" fill="#e7a83a"/></svg>
        </div>
        <div class="task-ic d-flex align-items-center justify-content-center">
            <svg width="22" height="22" viewBox="0 0 22 22"><path d="M3 12h17C20 5 16 1 11 1 6 1 2 5 1 11c0 7 4 10 10 10 3 0 6-1 8-3v-4c-4 3-11 4-12-2z M7 9c0-3 7-3 7 0z" fill="#0d79d6" fill-rule="evenodd"/></svg>
        </div>
        <div class="task-ic d-flex align-items-center justify-content-center">
            <svg width="22" height="24" viewBox="0 0 22 24"><path d="M1 6h20v16L1 21z" fill="#fff"/><path d="M7 6c0-6 8-6 8 0" fill="none" stroke="#fff" stroke-width="1.600"/><path d="M6 10h4v4H6zM11 10h4v4h-4zM6 15h4v4H6zM11 15h4v4h-4z" fill="#111"/></svg>
        </div>
        <div class="task-ic open d-flex align-items-center justify-content-center">
            <svg width="22" height="20" viewBox="0 0 22 20"><path d="M0 2h8l2 2h12v16H0z" fill="#f2d675"/><rect y="6" width="22" height="14" fill="#f7e4a0"/><rect x="6" y="11" width="10" height="9" fill="#35a4e6"/><rect x="9" y="15" width="4" height="5" fill="#f7e4a0"/></svg>
        </div>
        <div class="task-ic open d-flex align-items-center justify-content-center">
            <svg width="24" height="24" viewBox="0 0 24 24"><path d="M22 4C15 0 5 2 2 10c-2 7 4 13 11 12 5-1 8-5 7-10H11l-2 3h6c-1 3-7 4-9-1-1-6 6-9 11-7z" fill="#1788e0"/></svg>
        </div>
        <div class="task-ic open d-flex align-items-center justify-content-center">
            <svg width="24" height="24" viewBox="0 0 24 24"><rect width="24" height="24" rx="2" fill="#f2a21e"/><path d="M4 8l12-2 2 14-12 2z" fill="#f6e2b6" stroke="#a36a10" stroke-width=".6"/><path d="M7 11l8-1M7 14l8-1M8 17l8-1" stroke="#b07820"/><path d="M22 1L14 13l-2 1 1-3L20 0z" fill="#c0451c"/></svg>
        </div>
        <div class="task-ic act d-flex align-items-center justify-content-center">
            <svg width="24" height="24"><use href="#i-app" width="24" height="24"/></svg>
        </div>
        <div class="task-ic d-flex align-items-center justify-content-center">
            <svg width="24" height="24" viewBox="0 0 24 24"><circle cx="12" cy="12" r="10" fill="#57b947" stroke="#e7f5d8" stroke-width="1.500"/><path d="M6 10h12M6 14h12" stroke="#fff" stroke-width="2"/></svg>
        </div>
    </div>
    <div class="tray d-flex align-items-center">
        <svg class="tr-up" width="14" height="8" viewBox="0 0 14 8"><path d="M1 7l6-6 6 6" fill="none" stroke="#ddd" stroke-width="1.300"/></svg>
        <svg class="tr-bat" width="17" height="12" viewBox="0 0 17 12"><rect x="4.500" y="2.500" width="11" height="8" fill="#ddd" stroke="#ddd"/><path d="M0 3h3M1 1v3M0 3v2" stroke="#ddd"/><rect x="15.500" y="5" width="1.500" height="3" fill="#ddd"/></svg>
        <svg class="tr-wifi" width="16" height="14" viewBox="0 0 16 14"><path d="M1 13C2 7 7 2 14 1M4 13c1-4 4-7 10-8M7 13c1-2 3-4 7-4" fill="none" stroke="#999"/><circle cx="12" cy="12" r="1.600" fill="#ddd"/></svg>
        <svg class="tr-vol" width="16" height="13" viewBox="0 0 16 13"><path d="M1 4.500h3l4-3.500v11L4 8.500H1z" fill="none" stroke="#ddd"/><path d="M10 4c1.500 1.500 1.500 3.500 0 5M13 2c2 3 2 6 0 9" fill="none" stroke="#aaa"/></svg>
        <svg class="tr-kb" width="23" height="13" viewBox="0 0 23 13"><rect x=".5" y=".5" width="22" height="12" fill="none" stroke="#eee"/><path d="M3 3.500h17M3 6.500h17M6 9.500h11" stroke="#eee" stroke-dasharray="1 1"/></svg>
        <span class="tr-zh fw-bold">中</span>
        <svg width="16" height="16" viewBox="0 0 16 16"><rect x="1" y="1" width="14" height="14" rx="2" fill="#e8481a" transform="rotate(-6 8 8)"/><path d="M11.500 4.500h-5c-2 0-2 3 0 3h3c2 0 2 3.500 0 3.500h-5" fill="none" stroke="#fff" stroke-width="2"/></svg>
        <div class="clock"><div>17:00</div><div>2017/9/29</div></div>
        <svg class="note-ic" width="17" height="16" viewBox="0 0 17 16"><path d="M.5.500h16v11h-5l-3 3-3-3h-5z" fill="none" stroke="#eee"/></svg>
    </div>
</div>

<!-- floating on top of the window -->
<div class="ball">71</div>
<div class="ime d-flex align-items-start">
    <div class="ime-s">S</div>
    <div class="ime-bar d-flex align-items-center">
        <span>英</span><span>&#8217;,</span>
        <svg class="ime-mic" width="13" height="16" viewBox="0 0 13 16"><rect x="3.500" y="0" width="6" height="11" rx="3" fill="#2a7fd0"/><path d="M1 7c0 6 11 6 11 0M6.500 12v3" fill="none" stroke="#2a7fd0" stroke-width="1.300"/></svg>
        <svg width="16" height="13" viewBox="0 0 16 13"><rect width="16" height="13" rx="2" fill="#2a7fd0"/><path d="M2 3.500h12M2 6.500h12M4 9.500h8" stroke="#fff" stroke-dasharray="1 1"/></svg>
        <svg width="16" height="15" viewBox="0 0 16 15"><circle cx="6" cy="4" r="3" fill="#bbc"/><path d="M1 13c0-6 10-6 10 0z" fill="#bbc"/><rect x="9" y="8" width="7" height="6" fill="#f7f8fb" stroke="#99a"/></svg>
        <svg width="15" height="14" viewBox="0 0 15 14"><path d="M4 0L0 3l2 3 2-1v9h7V5l2 1 2-3-4-3c-1 2-5 2-6 0z" fill="#1d72c4"/></svg>
        <svg width="15" height="15" viewBox="0 0 15 15"><path d="M1 14l7-7c-1-3 1-6 5-6l-2 3 1 2 2-1 1-2c1 4-2 6-5 6l-7 6z" fill="#2a7fd0"/></svg>
    </div>
</div>

<script>
    // tree: [kind, name, code, icon]
    const treeData = [
        ['l','梁','(L)','t-beam'],['e','圈梁','(E)','t-ring'],
        ['f','板','','o'],
        ['l','现浇板','(B)','t-plate'],['l','螺旋板','(B)','t-spiral'],['l','柱帽','(V)','t-cap'],['l','板洞','(N)','t-hole'],
        ['l','板受力筋','(','t-grid'],['l','板负筋','(F)','t-grid'],['e','楼层板带','(','t-strip'],
        ['f','基础','','o'],
        ['l','基础梁','(F)','t-foot'],['l','筏板基础','(','t-raft'],['l','集水坑','(K)','t-pit'],['l','柱墩','(Y)','t-pier'],
        ['l','筏板主筋','(','t-grid'],['l','筏板负筋','(','t-grid'],['l','独立基础','(','t-iso'],['l','条形基础','(','t-foot'],
        ['l','桩承台','(V)','t-pile'],['l','承台梁','(F)','t-foot'],['l','桩','(U)','t-u'],['e','基础板带','(','t-strip'],
        ['f','其它','','s'],['f','自定义','','o'],
        ['z','自定义点','','t-pt'],['s','自定义线','(','t-ln'],['z','自定义面','','t-area'],['y','尺寸标注','(','t-dim']
    ];
    document.getElementById('tree-rows').innerHTML = treeData.map(([k, name, code, ic]) => {
        if (k === 'f') {
            const chev = ic === 'o' ? 'chev-d' : 'chev-r';
            const fold = ic === 'o' ? 'fold-open' : 'fold-shut';
            return `<div class="t-row t-fold d-flex align-items-center"><svg class="fold-chev"><use href="#${chev}"/></svg><svg class="fold-ic"><use href="#${fold}"/></svg><span>${name}</span></div>`;
        }
        const cls = { l: '', e: 't-end', z: 't-last2', s: 't-last2 t-sel', y: 't-last' }[k];
        return `<div class="t-row t-leaf ${cls} d-flex align-items-center"><svg width="15" height="15"><use href="#${ic}"/></svg><b>${name}<span class="ascii">${code}</span></b></div>`;
    }).join('');

    // component list
    const gear = '<svg width="11" height="11" viewBox="0 0 11 11"><circle cx="5.500" cy="5.500" r="4.500" fill="#ff0" stroke="#000" stroke-width="1.200" stroke-dasharray="1.500 1.500"/><circle cx="5.500" cy="5.500" r="1.500" fill="#222"/></svg>';
    const names = [];
    for (let i = 41; i <= 69; i++) names.push(i);
    names.push(73, 70, 71, 72, 74);
    document.getElementById('comp-rows').innerHTML = names.map((n, i) => {
        const last = i === names.length - 1;
        if (last) return `<div class="c-row c-last d-flex align-items-center"><span class="c-pill d-flex align-items-center">${gear}<span class="ascii">ZDYX-${n}</span></span></div>`;
        return `<div class="c-row d-flex align-items-center">${gear}<span class="ascii">ZDYX-${n}</span></div>`;
    }).join('');

    // floor grid
    const floors = [1, 2, 3, 4, 5, 6, 7, 8, 9, 18, 33];
    document.getElementById('prop-grid').innerHTML = '<tr class="head"><td></td><td></td></tr>' + floors.map(f =>
        `<tr class="${f === 1 ? 'now' : ''}"><td>${f}</td><td>${f > 8 ? '<span class="expand">+</span>' : ''}</td></tr>`
    ).join('');
</script>
<script src="https://cdn.jsdelivr.net/npm/bootstrap@5.3.0/dist/js/bootstrap.bundle.min.js"></script>
</body>
</html>
